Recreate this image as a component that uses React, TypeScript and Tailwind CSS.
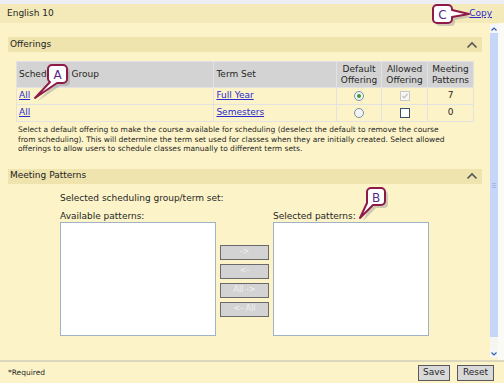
import React from "react";

const font = { fontFamily: '"DejaVu Sans", Verdana, sans-serif' };

function Chevron() {
  return (
    <svg width="12" height="8" viewBox="0 0 12 8" className="mr-[4px]">
      <path d="M1.5 6.5 L6 2 L10.5 6.5" fill="none" stroke="#555" strokeWidth="1.6" />
    </svg>
  );
}

function SectionHeader({ title }: { title: string }) {
  return (
    <div className="h-[15px] bg-[#efe4ae] flex items-center justify-between pl-[2px]">
      <span className="text-[9px] text-[#222]">{title}</span>
      <Chevron />
    </div>
  );
}

function Radio({ checked }: { checked?: boolean }) {
  return (
    <span className="inline-flex w-[10px] h-[10px] rounded-full border border-[#7b8fa6] bg-[#f4f4f4] items-center justify-center">
      {checked && <span className="w-[4px] h-[4px] rounded-full bg-[#3aa03a]" />}
    </span>
  );
}

function Check({ disabledChecked }: { disabledChecked?: boolean }) {
  if (disabledChecked)
    return (
      <span className="inline-flex w-[10px] h-[10px] border border-[#c8c8c8] bg-[#f6f6f2] items-center justify-center">
        <svg width="8" height="8" viewBox="0 0 8 8">
          <path d="M1.5 4 L3.2 5.8 L6.5 2" fill="none" stroke="#c0c0c0" strokeWidth="1.2" />
        </svg>
      </span>
    );
  return <span className="inline-block w-[10px] h-[10px] border border-[#3c4f6a] bg-white" />;
}

function Callout({
  left,
  top,
  w,
  h,
  d,
  letter,
  tx,
  ty,
}: {
  left: number;
  top: number;
  w: number;
  h: number;
  d: string;
  letter: string;
  tx: number;
  ty: number;
}) {
  return (
    <svg
      className="absolute"
      style={{ left, top }}
      width={w}
      height={h}
      viewBox={`0 0 ${w} ${h}`}
    >
      <path d={d} fill="#9a9a9a" opacity="0.45" transform="translate(3,3)" />
      <path d={d} fill="#ffffff" stroke="#8e1a4a" strokeWidth="2" strokeLinejoin="round" />
      <text
        x={tx}
        y={ty}
        textAnchor="middle"
        fontSize="12"
        fill="#5a2a8a"
        style={{ fontFamily: '"DejaVu Sans", sans-serif' }}
      >
        {letter}
      </text>
    </svg>
  );
}

function PatBtn({ label }: { label: string }) {
  return (
    <div className="w-[49px] h-[15px] bg-[#d3d3d3] border border-[#6a6a6a] flex items-center justify-center text-[8px] text-[#f2f2f2] whitespace-pre">
      {label}
    </div>
  );
}

export default function App() {
  return (
    <div className="w-[504px] h-[384px] relative overflow-hidden bg-white text-[#262626]" style={font}>
      <div className="h-[4px] bg-[#eceef4]" />
      <div className="h-[19px] bg-[#f4eab9] flex items-center justify-between pl-[7px] pr-[12px]">
        <span className="text-[9px]">English 10</span>
        <a className="text-[9px] text-[#2a2ad0] underline">Copy</a>
      </div>
      <div className="h-[337px] flex bg-[#fcf4c8]">
        <div className="flex-1 pl-[8px] pr-[8px] pt-[14px]">
          <SectionHeader title="Offerings" />
          <div className="pl-[8px] pr-[8px] pt-[9px]">
            <table className="border-collapse text-[9px]" style={{ width: 458 }}>
              <thead>
                <tr className="bg-[#d3d3d3] h-[26px]">
                  <th className="w-[198px] border border-[#e2e2e2] text-left font-normal pl-[2px]">Scheduling Group</th>
                  <th className="w-[123px] border border-[#e2e2e2] text-left font-normal pl-[2px]">Term Set</th>
                  <th className="w-[45px] border border-[#e2e2e2] text-center font-normal leading-[11px]">Default<br />Offering</th>
                  <th className="w-[46px] border border-[#e2e2e2] text-center font-normal leading-[11px]">Allowed<br />Offering</th>
                  <th className="w-[46px] border border-[#e2e2e2] text-center font-normal leading-[11px]">Meeting<br />Patterns</th>
                </tr>
              </thead>
              <tbody>
                <tr className="h-[17px]">
                  <td className="border border-[#e2e2e2] pl-[2px]"><a className="text-[#2a2ad0] underline">All</a></td>
                  <td className="border border-[#e2e2e2] pl-[2px]"><a className="text-[#2a2ad0] underline">Full Year</a></td>
                  <td className="border border-[#e2e2e2] text-center"><span className="inline-flex align-middle"><Radio checked /></span></td>
                  <td className="border border-[#e2e2e2] text-center"><span className="inline-flex align-middle"><Check disabledChecked /></span></td>
                  <td className="border border-[#e2e2e2] text-center">7</td>
                </tr>
                <tr className="h-[17px]">
                  <td className="border border-[#e2e2e2] pl-[2px]"><a className="text-[#2a2ad0] underline">All</a></td>
                  <td className="border border-[#e2e2e2] pl-[2px]"><a className="text-[#2a2ad0] underline">Semesters</a></td>
                  <td className="border border-[#e2e2e2] text-center"><span className="inline-flex align-middle"><Radio /></span></td>
                  <td className="border border-[#e2e2e2] text-center"><span className="inline-flex align-middle"><Check /></span></td>
                  <td className="border border-[#e2e2e2] text-center">0</td>
                </tr>
              </tbody>
            </table>
            <p className="text-[7.5px] leading-[9.5px] pl-[2px] pt-[3px] whitespace-nowrap">
              Select a default offering to make the course available for scheduling (deselect the default to remove the course
              <br />
              from scheduling). This will determine the term set used for classes when they are initially created. Select allowed
              <br />
              offerings to allow users to schedule classes manually to different term sets.
            </p>
          </div>
          <div className="mt-[15px]">
            <SectionHeader title="Meeting Patterns" />
          </div>
          <div className="pl-[52px] text-[9px]">
            <div className="mt-[9px] leading-[11px]">Selected scheduling group/term set:</div>
            <div className="flex mt-[7px]">
              <div className="flex flex-col">
                <span className="leading-[11px]">Available patterns:</span>
                <div className="w-[156px] h-[114px] bg-white border border-[#9fb2c6]" />
              </div>
              <div className="flex flex-col gap-[4px] pt-[34px] pl-[4px] pr-[4px]">
                <PatBtn label="->" />
                <PatBtn label="<-" />
                <PatBtn label="All ->" />
                <PatBtn label="<- All" />
              </div>
              <div className="flex flex-col">
                <span className="leading-[11px]">Selected patterns:</span>
                <div className="w-[156px] h-[114px] bg-white border border-[#9fb2c6]" />
              </div>
            </div>
          </div>
        </div>
        <div className="w-[8px] flex flex-col pt-[1px] pb-[2px]">
          <div className="h-[9px] bg-[#f4f6fb] flex items-center justify-center">
            <svg width="6" height="4" viewBox="0 0 6 4"><path d="M0.5 3.5 L3 1 L5.5 3.5" fill="none" stroke="#3a5fa8" strokeWidth="1.2" /></svg>
          </div>
          <div className="flex-1 bg-[#c6d6f8] flex items-center justify-center">
            <div className="flex flex-col gap-[1px]">
              <div className="w-[4px] h-[1px] bg-[#9fb6e6]" />
              <div className="w-[4px] h-[1px] bg-[#9fb6e6]" />
              <div className="w-[4px] h-[1px] bg-[#9fb6e6]" />
            </div>
          </div>
          <div className="h-[12px] bg-[#f6f6f0]" />
          <div className="h-[9px] bg-[#f4f6fb] flex items-center justify-center">
            <svg width="6" height="4" viewBox="0 0 6 4"><path d="M0.5 0.5 L3 3 L5.5 0.5" fill="none" stroke="#3a5fa8" strokeWidth="1.2" /></svg>
          </div>
        </div>
        <div className="w-[6px] bg-[#fbfbf6]" />
      </div>
      <div className="h-[2px] bg-[#dcd6bd]" />
      <div className="h-[21px] bg-[#fcf4c8] flex items-center justify-between pl-[8px] pr-[10px]">
        <span className="text-[7.5px]">*Required</span>
        <div className="flex gap-[7px]">
          <div className="w-[32px] h-[16px] bg-[#d9d9d9] border border-[#5a5a5a] flex items-center justify-center text-[9px]">Save</div>
          <div className="w-[37px] h-[16px] bg-[#d9d9d9] border border-[#5a5a5a] flex items-center justify-center text-[9px]">Reset</div>
        </div>
      </div>

      <Callout
        left={30}
        top={60}
        w={45}
        h={45}
        d="M22,5 H33 A4,4 0 0 1 37,9 V19 A4,4 0 0 1 33,23 H27 L5,38 L20,22 A4,4 0 0 1 18,19 V9 A4,4 0 0 1 22,5 Z"
        letter="A"
        tx={27.5}
        ty={19}
      />
      <Callout
        left={355}
        top={183}
        w={40}
        h={40}
        d="M16,5 H26 A4,4 0 0 1 30,9 V18 A4,4 0 0 1 26,22 H18 L5,35 L12,20 V9 A4,4 0 0 1 16,5 Z"
        letter="B"
        tx={21}
        ty={18.5}
      />
      <Callout
        left={428}
        top={0}
        w={45}
        h={30}
        d="M9,5 H20 A4,4 0 0 1 24,9 V10 L41,14 L24,17 V19 A4,4 0 0 1 20,23 H9 A4,4 0 0 1 5,19 V9 A4,4 0 0 1 9,5 Z"
        letter="C"
        tx={14.5}
        ty={18.5}
      />
    </div>
  );
}
